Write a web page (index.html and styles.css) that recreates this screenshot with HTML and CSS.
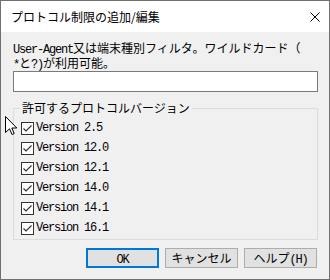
FILE: index.html
```html
<!DOCTYPE html>
<html lang="ja">
<head>
    <meta charset="UTF-8">
    <title>プロトコル制限の追加/編集</title>
    <link rel="stylesheet" href="styles.css">
</head>
<body>
    <div class="window">
        <div class="titlebar">
            <span class="title">プロトコル制限の追加/編集</span>
            <svg class="close" viewBox="0 0 10 10" width="10" height="10">
                <path d="M0.5 0.5 L9.5 9.5 M9.5 0.5 L0.5 9.5" stroke="#000" stroke-width="1" fill="none"/>
            </svg>
        </div>
        <div class="content">
            <p class="hint"><span class="en">User-Agent</span>又は端末種別フィルタ。ワイルドカード（<br><span class="en">*</span>と<span class="en">?)</span>が利用可能。</p>
            <input class="filter" type="text">
            <fieldset class="group">
                <legend>許可するプロトコルバージョン</legend>
                <label class="check"><span class="box"><svg viewBox="0 0 11 11" width="11" height="11"><path d="M1.5 5.5 L4 8 L9.5 2.5" stroke="#333" stroke-width="1.2" fill="none"/></svg></span><span class="en">Version 2.5</span></label>
                <label class="check"><span class="box"><svg viewBox="0 0 11 11" width="11" height="11"><path d="M1.5 5.5 L4 8 L9.5 2.5" stroke="#333" stroke-width="1.2" fill="none"/></svg></span><span class="en">Version 12.0</span></label>
                <label class="check"><span class="box"><svg viewBox="0 0 11 11" width="11" height="11"><path d="M1.5 5.5 L4 8 L9.5 2.5" stroke="#333" stroke-width="1.2" fill="none"/></svg></span><span class="en">Version 12.1</span></label>
                <label class="check"><span class="box"><svg viewBox="0 0 11 11" width="11" height="11"><path d="M1.5 5.5 L4 8 L9.5 2.5" stroke="#333" stroke-width="1.2" fill="none"/></svg></span><span class="en">Version 14.0</span></label>
                <label class="check"><span class="box"><svg viewBox="0 0 11 11" width="11" height="11"><path d="M1.5 5.5 L4 8 L9.5 2.5" stroke="#333" stroke-width="1.2" fill="none"/></svg></span><span class="en">Version 14.1</span></label>
                <label class="check"><span class="box"><svg viewBox="0 0 11 11" width="11" height="11"><path d="M1.5 5.5 L4 8 L9.5 2.5" stroke="#333" stroke-width="1.2" fill="none"/></svg></span><span class="en">Version 16.1</span></label>
            </fieldset>
            <div class="buttons">
                <button class="btn btn-default"><span class="en">OK</span></button>
                <button class="btn">キャンセル</button>
                <button class="btn">ヘルプ<span class="en">(H)</span></button>
            </div>
        </div>
        <svg class="cursor" viewBox="0 0 13 20" width="13" height="20">
            <path d="M0.5 0.5 L0.5 16.5 L4.5 12.8 L7 18.5 L9.2 17.5 L6.8 12 L11.8 12 Z" fill="#fff" stroke="#000" stroke-width="1"/>
        </svg>
    </div>
</body>
</html>
```

FILE: styles.css
```css
body {
    margin: 0;
    font-family: "Noto Sans CJK JP", sans-serif;
    font-size: 12px;
    color: #000;
}
.window {
    position: relative;
    width: 330px;
    height: 280px;
    box-sizing: border-box;
    border: 1px solid #707070;
    background: #f0f0f0;
    display: flex;
    flex-direction: column;
}
.titlebar {
    height: 31px;
    background: #fff;
    display: flex;
    align-items: center;
    justify-content: space-between;
    padding: 0 9px 0 10px;
}
.title {
    line-height: 14px;
}
.content {
    padding: 8px 11px 0 12px;
    display: flex;
    flex-direction: column;
}
.en {
    font-family: "Liberation Mono", monospace;
    font-size: 12px;
    letter-spacing: -1.2px;
}
.hint .en,
.btn .en {
    line-height: 10px;
}
.hint {
    height: 30px;
    margin: 0 0 1px;
    line-height: 15px;
}
.filter {
    width: 100%;
    height: 21px;
    box-sizing: border-box;
    margin: 0;
    padding: 0 3px;
    border: 1px solid #7a7a7a;
    background: #fff;
    outline: none;
}
.group {
    margin: 9px 0 0;
    min-width: 0;
    border: 1px solid #dcdcdc;
    padding: 3px 0 1px 6px;
}
.group legend {
    padding: 0 2px;
    line-height: 14px;
}
.check {
    display: flex;
    align-items: center;
    gap: 2px;
    height: 20px;
}
.box {
    width: 13px;
    height: 13px;
    box-sizing: border-box;
    margin-left: 1px;
    border: 1px solid #333;
    background: #fff;
    display: flex;
}
.buttons {
    display: flex;
    justify-content: flex-end;
    gap: 6px;
    margin-top: 8px;
    padding-right: 1px;
}
.btn {
    width: 73px;
    height: 20px;
    box-sizing: border-box;
    margin: 0;
    padding: 0;
    border: 1px solid #adadad;
    background: #e1e1e1;
    font-family: "Noto Sans CJK JP", sans-serif;
    font-size: 12px;
    line-height: 16px;
    color: #000;
}
.btn-default {
    border: 2px solid #0078d7;
}
.cursor {
    position: absolute;
    left: 4px;
    top: 115px;
}
```
